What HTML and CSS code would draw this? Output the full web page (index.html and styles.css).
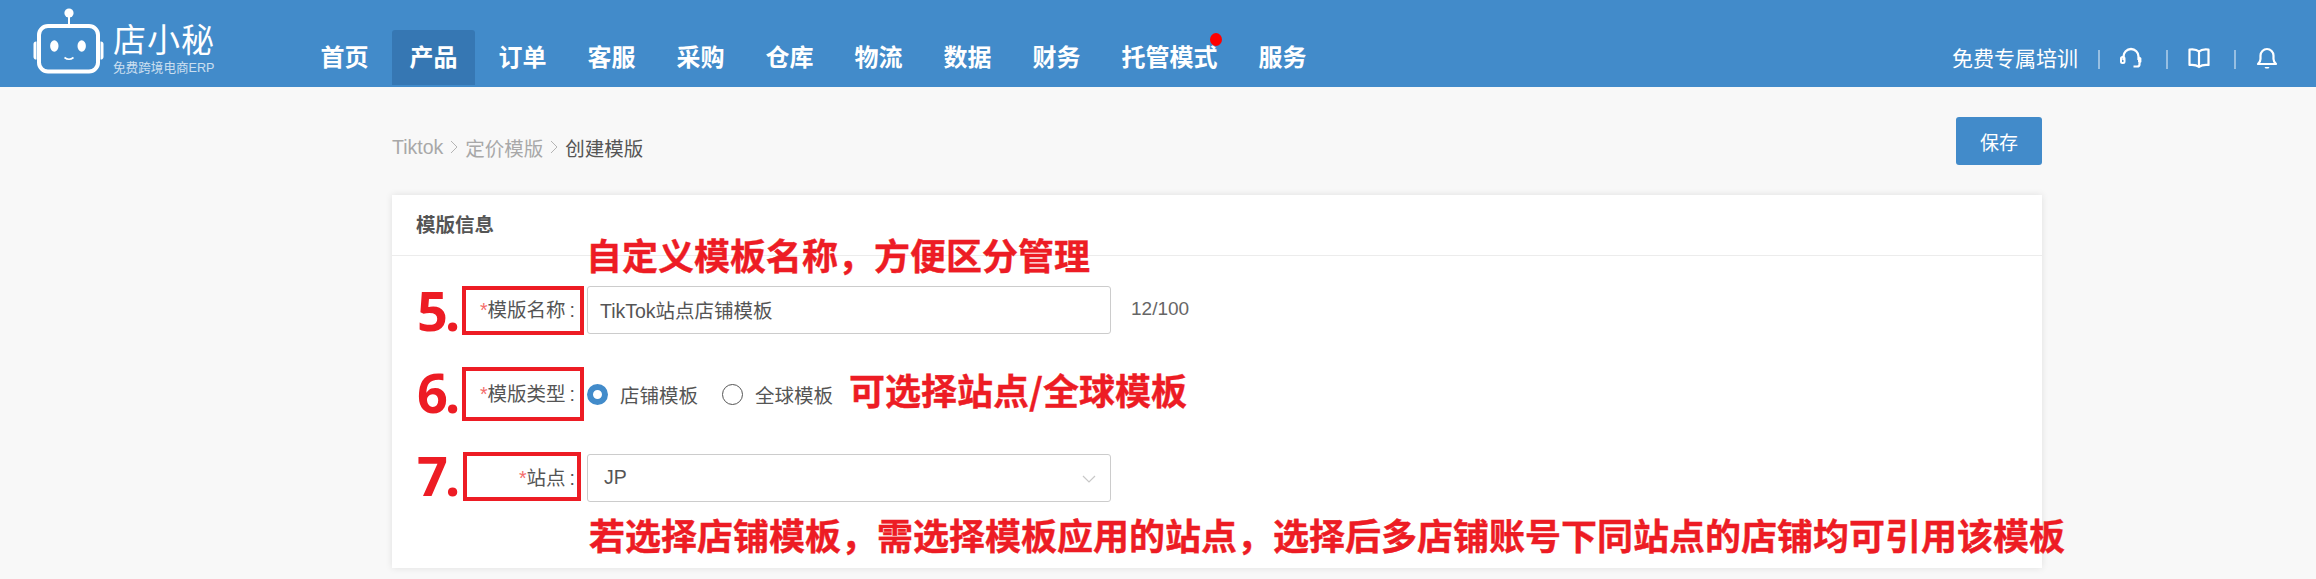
FILE: index.html
```html
<!DOCTYPE html>
<html lang="zh-CN">
<head>
<meta charset="utf-8">
<title>创建模版</title>
<link rel="stylesheet" href="styles.css">
</head>
<body>
<header class="topbar">
  <div class="logo">
    <svg class="logo-bot" viewBox="33 7 71 67" width="71" height="67" aria-hidden="true">
      <circle cx="69" cy="13" r="4.6" fill="#fff"/>
      <path d="M69 17v8" stroke="#fff" stroke-width="2" fill="none"/>
      <rect x="39" y="26" width="59" height="45.500" rx="9" fill="none" stroke="#fff" stroke-width="4"/>
      <path d="M36.500 41.500a2.500 2.500 0 0 0-3 2.500v13a2.500 2.500 0 0 0 3 2.500zM100.500 41.500a2.500 2.500 0 0 1 3 2.500v13a2.500 2.500 0 0 1-3 2.500z" fill="#fff"/>
      <ellipse cx="54.300" cy="46" rx="4.200" ry="5.800" fill="#fff"/>
      <ellipse cx="81.700" cy="46" rx="4.200" ry="5.800" fill="#fff"/>
      <path d="M64.500 57.500q4.500 3.500 9 0" stroke="#fff" stroke-width="1.600" fill="none"/>
    </svg>
    <div class="logo-text">
      <div class="logo-name">店小秘</div>
      <div class="logo-tag">免费跨境电商ERP</div>
    </div>
  </div>
  <nav class="nav">
    <a class="nav-item">首页</a>
    <a class="nav-item active">产品</a>
    <a class="nav-item">订单</a>
    <a class="nav-item">客服</a>
    <a class="nav-item">采购</a>
    <a class="nav-item">仓库</a>
    <a class="nav-item">物流</a>
    <a class="nav-item">数据</a>
    <a class="nav-item">财务</a>
    <a class="nav-item has-dot">托管模式<span class="dot"></span></a>
    <a class="nav-item">服务</a>
  </nav>
  <div class="tools">
    <span class="train">免费专属培训</span>
    <span class="sep"></span>
    <svg class="tool-icon" viewBox="0 0 24 24" aria-hidden="true">
      <path d="M4.500 14v-3.500a7.500 7.500 0 0 1 15 0V14" fill="none" stroke="#fff" stroke-width="2.300"/>
      <rect x="2" y="11" width="3.500" height="6" rx="1.500" fill="none" stroke="#fff" stroke-width="2"/>
      <rect x="19" y="11" width="3.400" height="6" rx="1.500" fill="#fff"/>
      <path d="M20.500 17v1.500q0 2-2.500 2h-3.500" fill="none" stroke="#fff" stroke-width="2.200"/>
    </svg>
    <span class="sep"></span>
    <svg class="tool-icon" viewBox="0 0 24 24" aria-hidden="true">
      <path d="M12 5.500C10 3.500 6.500 3 2.500 3.500v15.500c4-.5 7 0 9.500 2 2.500-2 5.500-2.500 9.500-2V3.500C17.500 3 14 3.500 12 5.500zM12 5.500V21" fill="none" stroke="#fff" stroke-width="2.200" stroke-linejoin="round"/>
    </svg>
    <span class="sep"></span>
    <svg class="tool-icon" viewBox="0 0 24 24" aria-hidden="true">
      <path d="M12 3a6.500 6.500 0 0 0-6.500 6.500v3.500q0 2.500-2.500 5h18q-2.500-2.500-2.500-5V9.500A6.500 6.500 0 0 0 12 3z" fill="none" stroke="#fff" stroke-width="2.200" stroke-linejoin="round"/>
      <path d="M9.500 21h5l-1 1.500h-3z" fill="#fff"/>
    </svg>
  </div>
</header>

<main class="page">
  <div class="page-head">
    <div class="crumbs">
      <span class="crumb">Tiktok</span>
      <svg class="crumb-sep" viewBox="0 0 8 14" aria-hidden="true"><path d="M1 1l6 6-6 6" fill="none" stroke="#b5b5b5" stroke-width="1"/></svg>
      <span class="crumb">定价模版</span>
      <svg class="crumb-sep" viewBox="0 0 8 14" aria-hidden="true"><path d="M1 1l6 6-6 6" fill="none" stroke="#b5b5b5" stroke-width="1"/></svg>
      <span class="crumb current">创建模版</span>
    </div>
    <button class="save" type="button">保存</button>
  </div>

  <section class="card">
    <div class="card-title">模版信息</div>
    <div class="form">
      <div class="row">
        <div class="label"><span class="req">*</span>模版名称<span class="colon">:</span></div>
        <div class="field"><span class="value">TikTok站点店铺模板</span></div>
        <div class="count">12/100</div>
      </div>
      <div class="row">
        <div class="label"><span class="req">*</span>模版类型<span class="colon">:</span></div>
        <div class="radios">
          <span class="radio checked"></span><span class="radio-text">店铺模板</span>
          <span class="radio"></span><span class="radio-text">全球模板</span>
        </div>
      </div>
      <div class="row">
        <div class="label"><span class="req">*</span>站点<span class="colon">:</span></div>
        <div class="field select"><span class="value">JP</span>
          <svg class="chev" viewBox="0 0 14 8" aria-hidden="true"><path d="M1 1l6 6 6-6" fill="none" stroke="#c8c8c8" stroke-width="1.200"/></svg>
        </div>
      </div>
    </div>

    <div class="note note-1">自定义模板名称，方便区分管理</div>
    <div class="note note-2">可选择站点/全球模板</div>
    <div class="note note-3">若选择店铺模板，需选择模板应用的站点，选择后多店铺账号下同站点的店铺均可引用该模板</div>
    <div class="num num-5">5.</div>
    <div class="num num-6">6.</div>
    <div class="num num-7">7.</div>
    <div class="box box-5"></div>
    <div class="box box-6"></div>
    <div class="box box-7"></div>
  </section>
</main>
</body>
</html>
```

FILE: styles.css
```css
* { box-sizing: border-box; }
html, body { margin: 0; padding: 0; }
body {
  background: #f8f8f8;
  color: #555;
  font-family: "Liberation Sans", "Noto Sans CJK SC", sans-serif;
  font-size: 19.5px;
  height: 579px;
  overflow: hidden;
}

.topbar {
  display: flex;
  align-items: flex-start;
  height: 87px;
  padding-left: 33px;
  padding-right: 14px;
  background: #428bca;
  color: #fff;
}
.logo { display: flex; width: 270px; margin-top: 7px; }
.logo-bot { display: block; flex: none; }
.logo-text { margin-left: 9px; margin-top: 15px; color: #fff; }
.logo-name { font-size: 33px; line-height: 38px; letter-spacing: 1px; white-space: nowrap; }
.logo-tag { font-size: 12.6px; line-height: 16px; opacity: .72; white-space: nowrap; }

.nav { display: flex; margin-top: 30px; }
.nav-item {
  position: relative;
  height: 55px;
  line-height: 55px;
  padding: 0 17.5px;
  margin-right: 6px;
  font-size: 24px;
  font-weight: 700;
  color: #fff;
  border-radius: 3px 3px 0 0;
}
.nav-item.active { background: #3677b3; }
.dot {
  position: absolute;
  top: 3px;
  right: 13px;
  width: 12px;
  height: 13px;
  border-radius: 50%;
  background: #f00;
}

.tools { display: flex; align-items: center; height: 55px; margin-top: 30px; margin-left: auto; }
.train { font-size: 21px; margin-right: 20px; margin-bottom: 2px; white-space: nowrap; }
.sep { width: 2px; height: 19px; margin-top: 3px; background: rgba(255, 255, 255, .45); }
.tool-icon { width: 24px; height: 24px; margin: 0 23px 0 19px; display: block; }

.page { width: 2042px; padding: 30px 0 0 392px; }
.page-head { display: flex; justify-content: space-between; align-items: flex-start; }
.crumbs { display: flex; align-items: center; height: 36px; margin-top: 12px; color: #a8a8a8; }
.crumb.current { color: #555; }
.crumb-sep { width: 8px; height: 14px; margin: 0 7px; }
.save {
  width: 86px;
  height: 48px;
  border: 0;
  border-radius: 3px;
  background: #428bca;
  color: #fff;
  font: inherit;
  font-size: 19px;
}

.card {
  position: relative;
  height: 373px;
  margin-top: 30px;
  background: #fff;
  box-shadow: 0 0 7px rgba(0, 0, 0, .1);
}
.card-title {
  height: 61px;
  line-height: 60px;
  padding-left: 24px;
  font-weight: 700;
  border-bottom: 1px solid #ececec;
}
.form { display: flex; flex-direction: column; gap: 36px; padding-top: 30px; }
.row { display: flex; align-items: center; height: 48px; }
.label { width: 183px; margin-bottom: 4px; text-align: right; white-space: nowrap; flex: none; }
.colon { margin-left: 4px; }
.req { color: #f56c6c; }
.field {
  position: relative;
  display: flex;
  align-items: center;
  width: 524px;
  height: 48px;
  margin-left: 12px;
  padding-left: 12px;
  border: 1px solid #ccc;
  border-radius: 3px;
  font-size: 19.5px;
  flex: none;
}
.value { margin-bottom: 2px; }
.select { padding-left: 16px; }
.chev { position: absolute; right: 14px; top: 20px; width: 14px; height: 8px; }
.count { margin-left: 20px; margin-bottom: 2px; font-size: 19px; color: #666; }

.radios { display: flex; align-items: center; margin-left: 12px; }
.radio {
  width: 21px;
  height: 21px;
  border: 1.5px solid #555;
  border-radius: 50%;
  background: #fff;
}
.radio.checked { border: 6.500px solid #428bca; }
.radio-text { margin-left: 12px; margin-right: 24px; }

.note, .num, .box { position: absolute; }
.note {
  font-size: 36px;
  line-height: 40px;
  font-weight: 700;
  color: #ed1c24;
  white-space: nowrap;
  font-family: "Noto Sans CJK SC", sans-serif;
  -webkit-text-stroke: .4px #ed1c24;
}
.note-1 { left: 194px; top: 39px; }
.note-2 { left: 457px; top: 174px; }
.note-3 { left: 197px; top: 319px; }
.num {
  left: 25px;
  font-size: 54px;
  line-height: 60px;
  font-weight: 700;
  letter-spacing: -3px;
  color: #ed1c24;
  font-family: "Noto Sans", sans-serif;
}
.num-5 { top: 85px; }
.num-6 { top: 167px; }
.num-7 { top: 250px; }
.box { border: 4px solid #ed1c24; }
.box-5 { left: 70px; top: 91px; width: 122px; height: 49px; }
.box-6 { left: 70px; top: 172px; width: 122px; height: 54px; }
.box-7 { left: 71px; top: 257px; width: 118px; height: 49px; }
```
